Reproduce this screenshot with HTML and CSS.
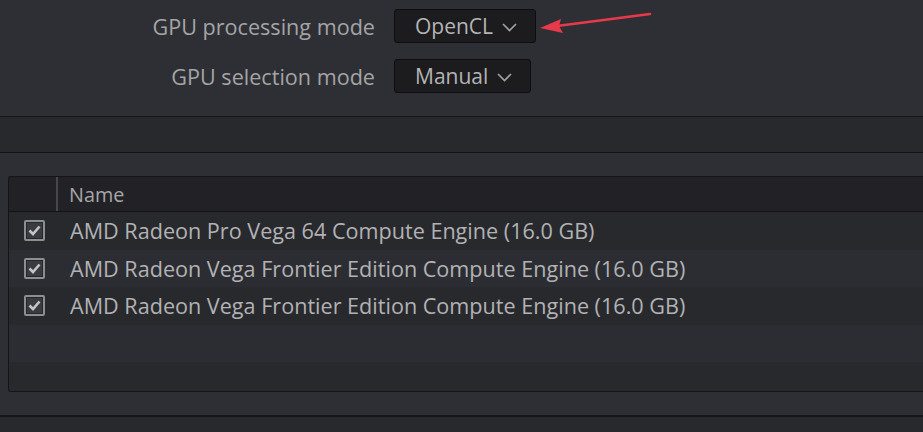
FILE: index.html
```html
<!DOCTYPE html>
<html>
<head>
<meta charset="utf-8">
<link rel="stylesheet" href="styles.css">
</head>
<body>
<div class="settings">
  <div class="field">
    <span class="label">GPU processing mode</span>
    <div class="select">OpenCL<svg class="chev" width="15" height="10" viewBox="0 0 15 10"><path d="M1 2 L7.5 8.5 L14 2" fill="none" stroke="#a0a0a2" stroke-width="1.7"/></svg></div>
    <svg class="arrow" width="120" height="24" viewBox="0 0 120 24"><path d="M111 3 L18 15" stroke="#e8394a" stroke-width="2.6" stroke-linecap="round"/><path d="M1 17 L22 8 L20 15 L24 22 Z" fill="#e8394a"/></svg>
  </div>
  <div class="field">
    <span class="label">GPU selection mode</span>
    <div class="select">Manual<svg class="chev" width="15" height="10" viewBox="0 0 15 10"><path d="M1 2 L7.5 8.5 L14 2" fill="none" stroke="#a0a0a2" stroke-width="1.7"/></svg></div>
  </div>
</div>
<div class="band"></div>
<div class="panel">
  <div class="table">
    <div class="thead">
      <div class="cell-check"></div>
      <div class="cell-name">Name</div>
    </div>
    <div class="row">
      <div class="cell-check"><span class="box"><svg width="13" height="11" viewBox="0 0 13 11"><path d="M1.5 5.5 L5 9 L11.5 1.5" fill="none" stroke="#c4c4c6" stroke-width="2.6"/></svg></span></div>
      <div class="cell-name">AMD Radeon Pro Vega 64 Compute Engine (16.0 GB)</div>
    </div>
    <div class="row alt">
      <div class="cell-check"><span class="box"><svg width="13" height="11" viewBox="0 0 13 11"><path d="M1.5 5.5 L5 9 L11.5 1.5" fill="none" stroke="#c4c4c6" stroke-width="2.6"/></svg></span></div>
      <div class="cell-name">AMD Radeon Vega Frontier Edition Compute Engine (16.0 GB)</div>
    </div>
    <div class="row">
      <div class="cell-check"><span class="box"><svg width="13" height="11" viewBox="0 0 13 11"><path d="M1.5 5.5 L5 9 L11.5 1.5" fill="none" stroke="#c4c4c6" stroke-width="2.6"/></svg></span></div>
      <div class="cell-name">AMD Radeon Vega Frontier Edition Compute Engine (16.0 GB)</div>
    </div>
    <div class="row alt"></div>
    <div class="row last"></div>
  </div>
</div>
<div class="foot"></div>
</body>
</html>
```
FILE: styles.css
```css
html, body {
  margin: 0;
  padding: 0;
  background: #2e2f34;
  font-family: "Open Sans", "Noto Sans", sans-serif;
  overflow: hidden;
}
body {
  width: 923px;
  height: 432px;
}
.settings {
  height: 117px;
  box-sizing: border-box;
  padding-top: 9px;
  display: flex;
  flex-direction: column;
  gap: 16px;
  border-bottom: 1px solid #141416;
}
.field {
  display: flex;
  align-items: center;
  gap: 19px;
  position: relative;
  height: 34px;
}
.label {
  width: 375px;
  text-align: right;
  font-size: 21.6px;
  color: #a4a4a6;
}
.select {
  height: 34px;
  box-sizing: border-box;
  background: #1c1c1e;
  border: 1px solid #0e0e10;
  border-radius: 3px;
  display: flex;
  align-items: center;
  padding: 0 18px 0 20px;
  gap: 9px;
  font-size: 21px;
  color: #b4b4b6;
}
.chev {
  margin-top: 2px;
}
.arrow {
  position: absolute;
  left: 539px;
  top: 2px;
}
.band {
  height: 35px;
  background: #28292d;
  border-bottom: 1px solid #141416;
}
.panel {
  height: 264px;
  box-sizing: border-box;
  padding: 23px 0 0 8px;
  border-bottom: 2px solid #151517;
}
.table {
  height: 214px;
  border: 1px solid #151517;
  border-right: none;
  border-radius: 3px 0 0 3px;
  overflow: hidden;
  background: #28292d;
}
.thead {
  height: 34px;
  background: #222226;
  border-bottom: 1px solid #131315;
  display: flex;
  align-items: stretch;
}
.thead .cell-check {
  width: 47px;
  border-right: 2px solid #46474c;
}
.thead .cell-name {
  padding-left: 11px;
  font-size: 19.8px;
  color: #a6a6a8;
  display: flex;
  align-items: center;
}
.row {
  height: 37.6px;
  display: flex;
  align-items: center;
  background: #28292d;
}
.row.alt {
  background: #2c2d32;
}
.row.last {
  height: 30px;
}
.row .cell-check {
  width: 49px;
  display: flex;
  justify-content: center;
}
.box {
  width: 17px;
  height: 17px;
  border: 2px solid #8e8e90;
  background: #3a3b40;
  border-radius: 2px;
  display: flex;
  align-items: center;
  justify-content: center;
  margin-left: 2px;
  box-shadow: inset 0 0 0 1px #26272b;
}
.row .cell-name {
  padding-left: 12px;
  font-size: 21.6px;
  color: #b2b2b4;
}
.foot {
  height: 16px;
  background: #28292d;
}
```
